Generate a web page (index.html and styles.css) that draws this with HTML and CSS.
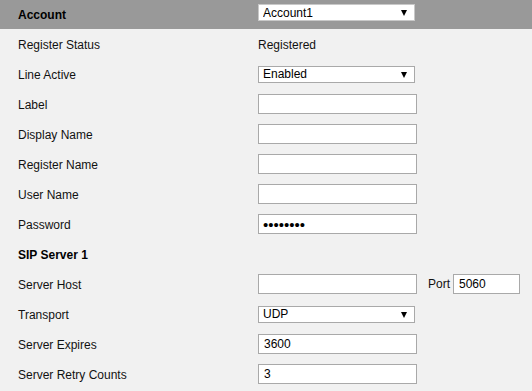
FILE: index.html
```html
<!DOCTYPE html>
<html lang="en">
<head>
    <meta charset="UTF-8">
    <title>Account Settings</title>
    <link rel="stylesheet" href="styles.css">
</head>
<body>
    <form class="settings">
        <div class="row head">
            <label class="name">Account</label>
            <div class="field">
                <div class="select">
                    <select><option>Account1</option></select>
                </div>
            </div>
        </div>
        <div class="row">
            <label class="name">Register Status</label>
            <div class="field value">Registered</div>
        </div>
        <div class="row">
            <label class="name">Line Active</label>
            <div class="field">
                <div class="select">
                    <select><option>Enabled</option></select>
                </div>
            </div>
        </div>
        <div class="row">
            <label class="name">Label</label>
            <div class="field"><input type="text"></div>
        </div>
        <div class="row">
            <label class="name">Display Name</label>
            <div class="field"><input type="text"></div>
        </div>
        <div class="row">
            <label class="name">Register Name</label>
            <div class="field"><input type="text"></div>
        </div>
        <div class="row">
            <label class="name">User Name</label>
            <div class="field"><input type="text"></div>
        </div>
        <div class="row">
            <label class="name">Password</label>
            <div class="field"><input type="password" value="12345678"></div>
        </div>
        <div class="row">
            <label class="name section">SIP Server 1</label>
        </div>
        <div class="row">
            <label class="name">Server Host</label>
            <div class="field">
                <input type="text">
                <span class="port-label">Port</span>
                <input type="text" class="port" value="5060">
            </div>
        </div>
        <div class="row">
            <label class="name">Transport</label>
            <div class="field">
                <div class="select">
                    <select><option>UDP</option></select>
                </div>
            </div>
        </div>
        <div class="row">
            <label class="name">Server Expires</label>
            <div class="field"><input type="text" value="3600"></div>
        </div>
        <div class="row">
            <label class="name">Server Retry Counts</label>
            <div class="field"><input type="text" value="3"></div>
        </div>
    </form>
</body>
</html>
```

FILE: styles.css
```css
body {
    margin: 0;
    background-color: #f1f1f1;
    font-family: "Liberation Sans", Arial, sans-serif;
    font-size: 12px;
    color: #111;
}
.settings {
    display: flex;
    flex-direction: column;
}
.row {
    display: flex;
    align-items: center;
    height: 30px;
    padding-left: 18px;
}
.row.head {
    height: 29px;
    background-color: #999999;
}
.name {
    width: 240px;
    flex-shrink: 0;
    padding-top: 1px;
}
.head .name, .section {
    font-weight: bold;
    color: #000;
}
.field {
    display: flex;
    align-items: center;
}
.field.value {
    padding-top: 1px;
}
.head .field {
    align-self: flex-start;
    padding-top: 4px;
}
input {
    box-sizing: border-box;
    width: 159px;
    height: 20px;
    margin: 0;
    padding: 0 5px;
    border: 1px solid #a9a9a9;
    background-color: #fff;
    font-family: inherit;
    font-size: 12px;
    color: #000;
    outline: none;
}
input[type="password"] {
    font-size: 15px;
    padding-left: 4px;
}
.port-label {
    margin-left: 11px;
    margin-right: 3px;
}
input.port {
    width: 67px;
}
.select {
    position: relative;
    width: 157px;
    height: 17px;
}
.select select {
    box-sizing: border-box;
    width: 100%;
    height: 100%;
    margin: 0;
    padding: 0 4px;
    border: 1px solid #a9a9a9;
    border-radius: 0;
    background-color: #fff;
    font-family: inherit;
    font-size: 12px;
    color: #000;
    appearance: none;
    -webkit-appearance: none;
    outline: none;
}
.head .select select {
    border-color: #c8c8c8;
}
.select::after {
    content: "";
    position: absolute;
    right: 8px;
    top: 6px;
    border-left: 3.5px solid transparent;
    border-right: 3.5px solid transparent;
    border-top: 6px solid #000;
    pointer-events: none;
}
```
